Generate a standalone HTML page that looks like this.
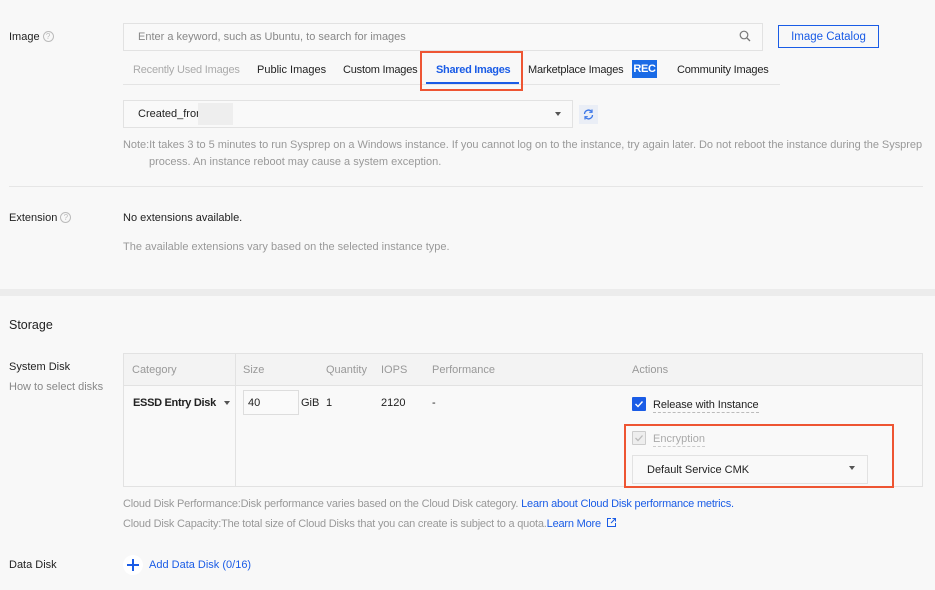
<!DOCTYPE html>
<html><head><meta charset="utf-8"><style>
*{margin:0;padding:0;box-sizing:border-box}
body{width:935px;height:590px;background:#f8f8f8;font-family:"Liberation Sans",sans-serif;font-size:11px;color:#333;position:relative;overflow:hidden}
.a{position:absolute;white-space:nowrap}
.g{color:#999}.b{color:#1a5ce6}
.q{display:inline-block;width:11px;height:11px;border:1px solid #bbb;border-radius:50%;font-size:8px;line-height:9px;text-align:center;color:#bbb;vertical-align:1px;margin-left:3px}
.box{position:absolute;border:1px solid #e2e2e2;background:#f9f9f9}
.red{position:absolute;border:2px solid #ee5533}
.caret{position:absolute;width:0;height:0;border-left:3px solid transparent;border-right:3px solid transparent;border-top:4px solid #555}
</style></head><body>
<div class="a" style="left:9px;top:31px;color:#222">Image<span class="q">?</span></div>
<div class="box" style="left:123px;top:23px;width:640px;height:28px"></div>
<div class="a g" style="left:138px;top:31px;color:#888">Enter a keyword, such as Ubuntu, to search for images</div>
<svg class="a" style="left:739px;top:30px" width="12" height="12"><circle cx="5" cy="5" r="3.8" fill="none" stroke="#777" stroke-width="1.2"/><line x1="8" y1="8" x2="11" y2="11" stroke="#777" stroke-width="1.3"/></svg>
<div class="a" style="left:778px;top:25px;width:101px;height:23px;border:1px solid #1a5ce6;color:#1a5ce6;display:flex;align-items:center;justify-content:center;font-size:11.5px">Image Catalog</div>
<div class="a" style="left:123px;top:84px;width:657px;height:1px;background:#e4e4e4"></div>
<div class="a" style="left:133px;top:64px;color:#aaa;letter-spacing:-0.2px">Recently Used Images</div>
<div class="a" style="left:257px;top:64px;color:#222">Public Images</div>
<div class="a" style="left:343px;top:64px;color:#222;letter-spacing:-0.2px">Custom Images</div>
<div class="a" style="left:436px;top:64px;color:#1a5ce6;font-weight:bold;letter-spacing:-0.3px">Shared Images</div>
<div class="a" style="left:426px;top:82px;width:93px;height:2px;background:#1a5ce6"></div>
<div class="red" style="left:420px;top:51px;width:103px;height:40px"></div>
<div class="a" style="left:528px;top:64px;color:#222;letter-spacing:-0.2px">Marketplace Images</div>
<div class="a" style="left:632px;top:60px;width:25px;height:18px;background:#1a6be6;color:#fff;font-weight:bold;display:flex;align-items:center;justify-content:center;letter-spacing:-0.3px">REC</div>
<div class="a" style="left:677px;top:64px;color:#222;letter-spacing:-0.2px">Community Images</div>
<div class="box" style="left:123px;top:100px;width:450px;height:28px"></div>
<div class="a" style="left:138px;top:108px;color:#222">Created_from</div>
<div class="a" style="left:198px;top:103px;width:35px;height:22px;background:#eee"></div>
<div class="caret" style="left:555px;top:112px"></div>
<div class="a" style="left:579px;top:105px;width:19px;height:19px;background:#eaeef6"></div>
<svg class="a" style="left:582px;top:108px" width="13" height="13"><path d="M2.5 6a4 4 0 0 1 7-2.5M10.5 7a4 4 0 0 1-7 2.5" fill="none" stroke="#3a76e8" stroke-width="1.3"/><path d="M10 1.5v2.8H7.2M3 11.5V8.7h2.8" fill="none" stroke="#3a76e8" stroke-width="1.2"/></svg>
<div class="a g" style="left:123px;top:139px;letter-spacing:-0.03px">Note:It takes 3 to 5 minutes to run Sysprep on a Windows instance. If you cannot log on to the instance, try again later. Do not reboot the instance during the Sysprep</div>
<div class="a g" style="left:149px;top:156px">process. An instance reboot may cause a system exception.</div>
<div class="a" style="left:9px;top:186px;width:914px;height:1px;background:#e6e6e6"></div>
<div class="a" style="left:9px;top:212px;color:#222">Extension<span class="q">?</span></div>
<div class="a" style="left:123px;top:212px;color:#222">No extensions available.</div>
<div class="a g" style="left:123px;top:241px">The available extensions vary based on the selected instance type.</div>
<div class="a" style="left:0;top:289px;width:935px;height:7px;background:#ececec"></div>
<div class="a" style="left:9px;top:318px;font-size:12.5px;color:#222">Storage</div>
<div class="a" style="left:9px;top:361px;color:#222">System Disk</div>
<div class="a g" style="left:9px;top:381px;color:#888">How to select disks</div>
<div class="box" style="left:123px;top:353px;width:800px;height:134px"></div>
<div class="a" style="left:124px;top:354px;width:798px;height:32px;background:#f3f3f3;border-bottom:1px solid #e2e2e2"></div>
<div class="a" style="left:235px;top:354px;width:1px;height:132px;background:#e2e2e2"></div>
<div class="a g" style="left:132px;top:364px">Category</div>
<div class="a g" style="left:243px;top:364px">Size</div>
<div class="a g" style="left:326px;top:364px">Quantity</div>
<div class="a g" style="left:381px;top:364px">IOPS</div>
<div class="a g" style="left:432px;top:364px">Performance</div>
<div class="a g" style="left:632px;top:364px">Actions</div>
<div class="a" style="left:133px;top:397px;color:#222;font-weight:bold;letter-spacing:-0.3px">ESSD Entry Disk</div>
<div class="caret" style="left:224px;top:401px"></div>
<div class="a" style="left:243px;top:390px;width:56px;height:25px;border:1px solid #ddd;background:#fafafa"></div>
<div class="a" style="left:248px;top:397px;color:#222">40</div>
<div class="a" style="left:301px;top:397px;color:#222">GiB</div>
<div class="a" style="left:326px;top:397px;color:#222">1</div>
<div class="a" style="left:381px;top:397px;color:#222">2120</div>
<div class="a" style="left:432px;top:397px;color:#222">-</div>
<div class="a" style="left:632px;top:397px;width:14px;height:14px;background:#1a5ce6;border-radius:1px"></div>
<svg class="a" style="left:632px;top:397px" width="14" height="14"><path d="M3.5 7l2.5 2.5 4.5-5" fill="none" stroke="#fff" stroke-width="1.4"/></svg>
<div class="a" style="left:653px;top:398px;color:#222;border-bottom:1px dashed #bbb;line-height:14px;letter-spacing:-0.1px">Release with Instance</div>
<div class="a" style="left:632px;top:431px;width:14px;height:14px;border:1px solid #ccc;background:#eee;border-radius:1px"></div>
<svg class="a" style="left:632px;top:431px" width="14" height="14"><path d="M3.5 7l2.5 2.5 4.5-5" fill="none" stroke="#bbb" stroke-width="1.3"/></svg>
<div class="a" style="left:653px;top:432px;color:#aaa;border-bottom:1px dashed #ccc;line-height:14px">Encryption</div>
<div class="box" style="left:632px;top:455px;width:236px;height:29px"></div>
<div class="a" style="left:647px;top:464px;color:#222">Default Service CMK</div>
<div class="caret" style="left:849px;top:466px"></div>
<div class="red" style="left:624px;top:424px;width:270px;height:64px"></div>
<div class="a g" style="left:123px;top:498px;letter-spacing:-0.2px">Cloud Disk Performance:Disk performance varies based on the Cloud Disk category. <span class="b">Learn about Cloud Disk performance metrics.</span></div>
<div class="a g" style="left:123px;top:518px;letter-spacing:-0.2px">Cloud Disk Capacity:The total size of Cloud Disks that you can create is subject to a quota.<span class="b">Learn More</span></div>
<svg class="a" style="left:606px;top:517px" width="11" height="11"><path d="M5 1.5H1.5v8h8V6M6.5 1.5h3v3M9.5 1.5L5 6" fill="none" stroke="#1a5ce6" stroke-width="1"/></svg>
<div class="a" style="left:9px;top:559px;color:#222">Data Disk</div>
<div class="a" style="left:123px;top:555px;width:20px;height:20px;border-radius:50%;background:#fff"></div>
<div class="a" style="left:127px;top:564px;width:12px;height:1.5px;background:#1a5ce6"></div>
<div class="a" style="left:132.3px;top:559px;width:1.5px;height:12px;background:#1a5ce6"></div>
<div class="a b" style="left:149px;top:559px">Add Data Disk (0/16)</div>
</body></html>
